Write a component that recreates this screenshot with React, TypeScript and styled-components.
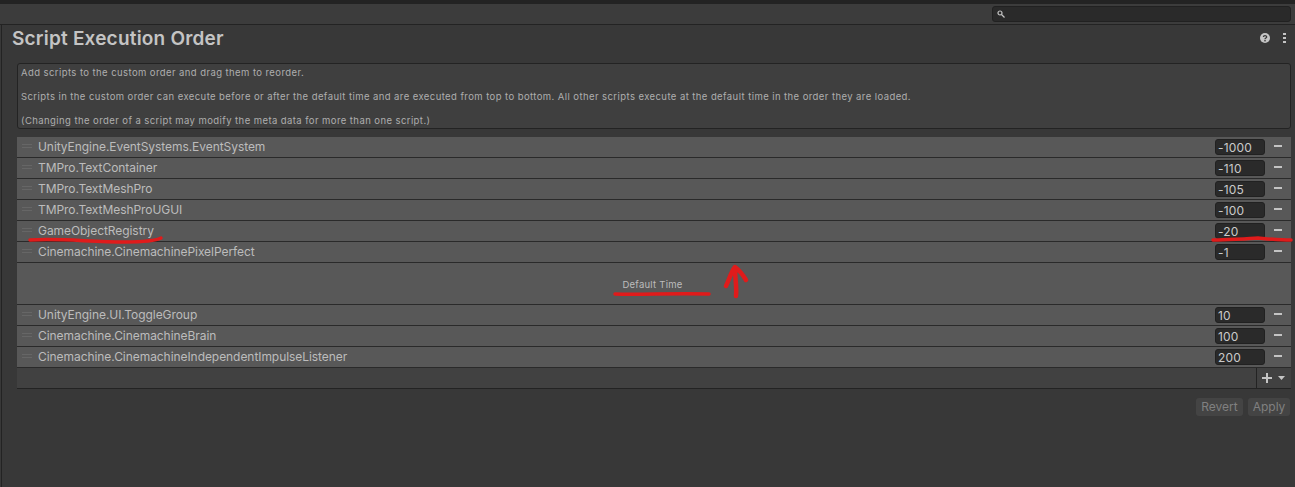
import React from "react";
import styled, { createGlobalStyle } from "styled-components";

const Global = createGlobalStyle`
  html, body { margin: 0; padding: 0; background: #383838; }
  body { font-family: Inter, "Liberation Sans", sans-serif; overflow: hidden; }
  * { box-sizing: border-box; }
`;

const Page = styled.div`
  position: relative;
  width: 1295px;
  height: 487px;
  overflow: hidden;
  background: #383838;
  display: flex;
  flex-direction: column;
`;
const TopEdge = styled.div`
  height: 4px;
  flex: none;
  background: #232323;
`;
const SearchBar = styled.div`
  height: 21px;
  flex: none;
  background: #3c3c3c;
  border-bottom: 1px solid #232323;
  display: flex;
  justify-content: flex-end;
  align-items: center;
  padding-right: 4px;
`;
const SearchField = styled.div`
  width: 299px;
  height: 16px;
  background: #2a2a2a;
  border: 1px solid #212121;
  border-radius: 3px;
  display: flex;
  align-items: center;
  padding-left: 4px;
`;
const Body = styled.div`
  flex: 1;
  border-left: 1px solid #232323;
  margin-left: 1px;
  padding: 0 4px 0 15px;
  display: flex;
  flex-direction: column;
`;
const Header = styled.div`
  height: 38px;
  flex: none;
  margin-left: -5px;
  padding-bottom: 12px;
  display: flex;
  align-items: center;
  justify-content: space-between;
`;
const Title = styled.h1`
  margin: 0;
  font-size: 19px;
  font-weight: 600;
  letter-spacing: 0.2px;
  color: #c4c4c4;
`;
const HeaderIcons = styled.div`
  display: flex;
  align-items: center;
  gap: 13px;
  margin-right: 5px;
`;
const InfoBox = styled.div`
  height: 66px;
  background: #3f3f3f;
  border: 1px solid #232323;
  border-radius: 3px;
  padding: 3px 3px 1px;
  display: flex;
  flex-direction: column;
  justify-content: space-between;
  margin-bottom: 8px;
`;
const InfoLine = styled.p`
  margin: 0;
  font-size: 9.5px;
  line-height: 12px;
  color: #aeaeae;
  letter-spacing: 0.42px;
  white-space: nowrap;
`;
const List = styled.div`
  display: flex;
  flex-direction: column;
`;
const Row = styled.div`
  height: 21px;
  background: #585858;
  border-bottom: 1px solid #2a2a2a;
  display: flex;
  align-items: center;
`;
const Grip = styled.span`
  width: 10px;
  height: 4px;
  margin: -2px 6px 0 5px;
  border-top: 1px solid #666;
  border-bottom: 1px solid #666;
`;
const RowName = styled.span`
  flex: 1;
  font-size: 12px;
  margin-top: -2px;
  color: #bcbcbc;
  letter-spacing: -0.06px;
  white-space: nowrap;
`;
const OrderField = styled.span`
  width: 50px;
  height: 16px;
  background: #2a2a2a;
  border: 1px solid #212121;
  border-radius: 3px;
  padding-left: 2px;
  margin-top: -1px;
  font-size: 12px;
  line-height: 15px;
  color: #cacaca;
  letter-spacing: 0.2px;
`;
const Minus = styled.span`
  width: 8px;
  height: 2px;
  background: #c4c4c4;
  margin: -3px 9px 0 9px;
`;
const DefaultRow = styled.div`
  height: 42px;
  background: #585858;
  border-bottom: 1px solid #2a2a2a;
  display: flex;
  align-items: center;
  justify-content: center;
  font-size: 9.5px;
  letter-spacing: 0.25px;
  color: #bcbcbc;
  padding: 1px 3px 0 0;
`;
const Footer = styled.div`
  height: 21px;
  background: #414141;
  border-bottom: 1px solid #232323;
  display: flex;
  justify-content: flex-end;
`;
const AddButton = styled.div`
  width: 35px;
  border-left: 1px solid #232323;
  padding-left: 5px;
  display: flex;
  align-items: center;
  gap: 6px;
`;
const Actions = styled.div`
  display: flex;
  justify-content: flex-end;
  gap: 5px;
  margin-top: 9px;
  padding-right: 1px;
`;
const ActionButton = styled.div<{ $w: number }>`
  width: ${(p) => p.$w}px;
  height: 18px;
  background: #444;
  border-radius: 3px;
  font-size: 12px;
  line-height: 18px;
  text-align: center;
  color: #808080;
`;
const Scribbles = styled.svg`
  position: absolute;
  inset: 0;
  pointer-events: none;
`;

const top = [
  ["UnityEngine.EventSystems.EventSystem", "-1000"],
  ["TMPro.TextContainer", "-110"],
  ["TMPro.TextMeshPro", "-105"],
  ["TMPro.TextMeshProUGUI", "-100"],
  ["GameObjectRegistry", "-20"],
  ["Cinemachine.CinemachinePixelPerfect", "-1"],
];
const bottom = [
  ["UnityEngine.UI.ToggleGroup", "10"],
  ["Cinemachine.CinemachineBrain", "100"],
  ["Cinemachine.CinemachineIndependentImpulseListener", "200"],
];

const ScriptRow = ({ name, order }: { name: string; order: string }) => (
  <Row>
    <Grip />
    <RowName>{name}</RowName>
    <OrderField>{order}</OrderField>
    <Minus />
  </Row>
);

export default function App() {
  return (
    <Page>
      <Global />
      <TopEdge />
      <SearchBar>
        <SearchField>
          <svg width="8" height="8" viewBox="0 0 8 8">
            <circle cx="3" cy="3" r="2" fill="none" stroke="#c4c4c4" strokeWidth="1.2" />
            <path d="M4.5 4.5L7.5 7.5" stroke="#c4c4c4" strokeWidth="1.3" />
          </svg>
        </SearchField>
      </SearchBar>
      <Body>
        <Header>
          <Title>Script Execution Order</Title>
          <HeaderIcons>
            <svg width="10" height="10" viewBox="0 0 10 10">
              <circle cx="5" cy="5" r="5" fill="#c4c4c4" />
              <path d="M3.4 4C3.4 2.2 6.7 2.2 6.7 3.9C6.7 5 5 5 5 6.2" fill="none" stroke="#383838" strokeWidth="1.3" />
              <rect x="4.3" y="7" width="1.4" height="1.4" fill="#383838" />
            </svg>
            <svg width="3" height="10" viewBox="0 0 3 10">
              <rect x="0" y="0" width="3" height="2" fill="#c4c4c4" />
              <rect x="0" y="4" width="3" height="2" fill="#c4c4c4" />
              <rect x="0" y="8" width="3" height="2" fill="#c4c4c4" />
            </svg>
          </HeaderIcons>
        </Header>
        <InfoBox>
          <InfoLine>Add scripts to the custom order and drag them to reorder.</InfoLine>
          <InfoLine>
            Scripts in the custom order can execute before or after the default time and are executed from top to bottom. All other scripts execute at the default time in the order they are loaded.
          </InfoLine>
          <InfoLine>(Changing the order of a script may modify the meta data for more than one script.)</InfoLine>
        </InfoBox>
        <List>
          {top.map(([n, o]) => (
            <ScriptRow key={n} name={n} order={o} />
          ))}
          <DefaultRow>Default Time</DefaultRow>
          {bottom.map(([n, o]) => (
            <ScriptRow key={n} name={n} order={o} />
          ))}
          <Footer>
            <AddButton>
              <svg width="10" height="10" viewBox="0 0 10 10">
                <path d="M5 0V10M0 5H10" stroke="#c4c4c4" strokeWidth="2" />
              </svg>
              <svg width="7" height="4" viewBox="0 0 7 4">
                <path d="M0 0H7L3.5 4Z" fill="#c4c4c4" />
              </svg>
            </AddButton>
          </Footer>
        </List>
        <Actions>
          <ActionButton $w={47}>Revert</ActionButton>
          <ActionButton $w={42}>Apply</ActionButton>
        </Actions>
      </Body>
      <Scribbles width="1295" height="487" viewBox="0 0 1295 487">
        <g fill="none" stroke="#e01b1b" strokeWidth="3.5" strokeLinecap="round" strokeLinejoin="round">
          <path d="M30 240C60 238 90 242 125 242C140 242 155 241 161 238" />
          <path d="M1213 240C1235 239 1250 239 1258 238C1270 239 1280 240 1291 240" />
          <path d="M615 294C640 295 670 293 709 294" />
          <path strokeWidth="4.5" d="M736 296C737 288 735 278 735 268M726 286C729 280 731 272 735 267C739 270 743 275 746 280" />
        </g>
      </Scribbles>
    </Page>
  );
}
